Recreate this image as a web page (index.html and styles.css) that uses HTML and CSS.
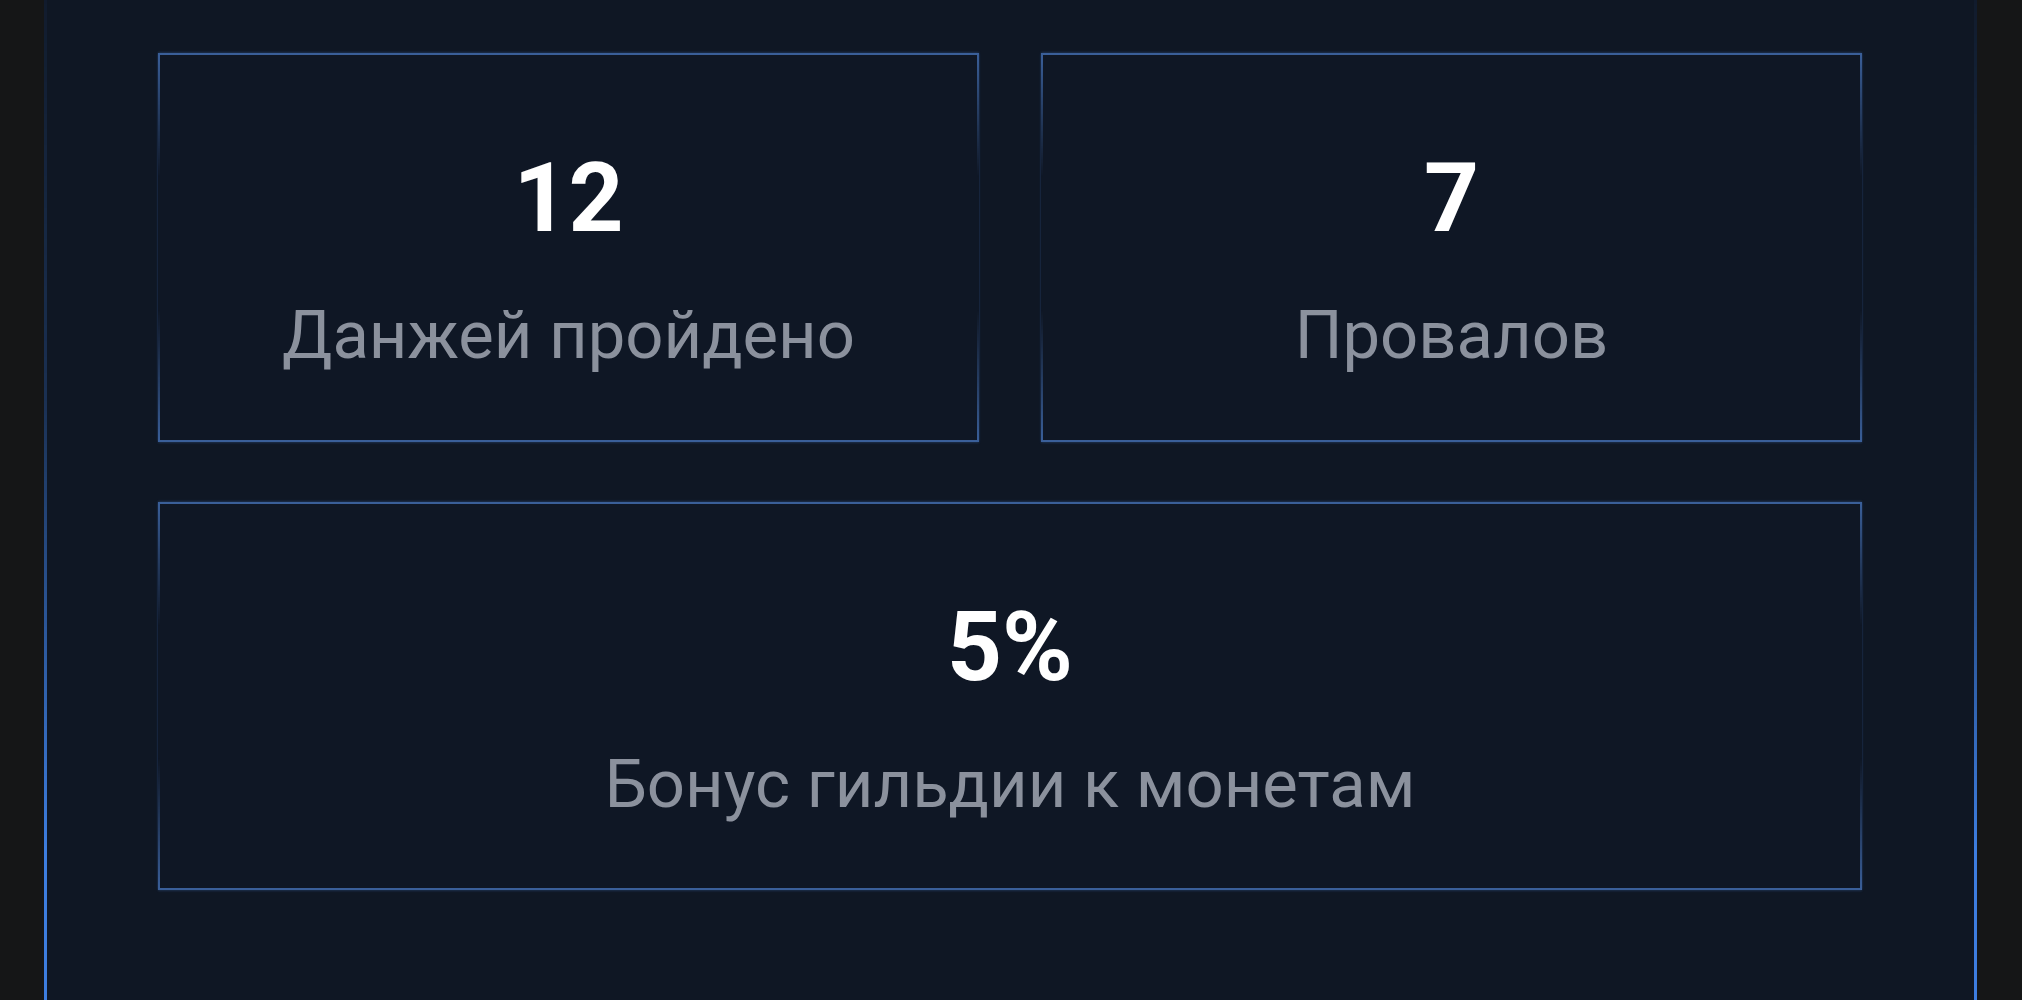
FILE: index.html
```html
<!DOCTYPE html>
<html lang="ru">
<head>
    <meta charset="utf-8">
    <title>Гильдия</title>
    <link rel="stylesheet" href="styles.css">
</head>
<body>
<section class="guild-panel">
    <div class="stats">
        <div class="stat">
            <div class="stat-value">12</div>
            <div class="stat-label">Данжей пройдено</div>
        </div>
        <div class="stat">
            <div class="stat-value">7</div>
            <div class="stat-label">Провалов</div>
        </div>
        <div class="stat stat-wide">
            <div class="stat-value">5%</div>
            <div class="stat-label">Бонус гильдии к монетам</div>
        </div>
    </div>
</section>
</body>
</html>
```

FILE: styles.css
```css
body {
    margin: 0;
    padding: 0;
    background-color: #151617;
    font-family: Roboto, "Noto Sans", sans-serif;
    min-height: 1000px;
}
.guild-panel {
    position: relative;
    margin-left: 44px;
    width: 1933px;
    min-height: 1000px;
    box-sizing: border-box;
    padding: 53px 115px 0 114px;
    background-color: #0f1724;
}
/* side glow, fades in towards the bottom */
.guild-panel::before {
    content: "";
    position: absolute;
    top: 0;
    right: 0;
    bottom: 0;
    left: 0;
    border-left: 3px solid #3d7ddf;
    border-right: 3px solid #3d7ddf;
    pointer-events: none;
    -webkit-mask-image: linear-gradient(to bottom, rgba(0,0,0,0.05) 0%, rgba(0,0,0,0.25) 40%, #000 85%);
    mask-image: linear-gradient(to bottom, rgba(0,0,0,0.05) 0%, rgba(0,0,0,0.25) 40%, #000 85%);
}
.stats {
    display: grid;
    grid-template-columns: 1fr 1fr;
    column-gap: 62px;
    row-gap: 60px;
}
.stat {
    position: relative;
    height: 389px;
    box-sizing: border-box;
    border-top: 2px solid #3a5f99;
    border-bottom: 2px solid #3a5f99;
    box-shadow: 0 -1px 2px rgba(58, 95, 153, 0.35), 0 1px 2px rgba(58, 95, 153, 0.35);
    background-color: #0f1725;
    display: flex;
    flex-direction: column;
    align-items: center;
    justify-content: center;
    padding-top: 24px;
}
/* side borders only near the corners */
.stat::before {
    content: "";
    position: absolute;
    top: -2px;
    bottom: -2px;
    left: 0;
    right: 0;
    border-left: 2px solid #3a5f99;
    border-right: 2px solid #3a5f99;
    pointer-events: none;
    -webkit-mask-image: linear-gradient(to bottom, #000 0%, transparent 32%, transparent 66%, #000 100%);
    mask-image: linear-gradient(to bottom, #000 0%, transparent 32%, transparent 66%, #000 100%);
}
.stat-wide {
    grid-column: span 2;
    height: 388px;
}
.stat-value {
    color: #ffffff;
    font-size: 96px;
    font-weight: 700;
    line-height: 1;
    margin-bottom: 56px;
}
.stat-label {
    color: #8b919d;
    font-size: 67px;
    line-height: 1;
}
```
